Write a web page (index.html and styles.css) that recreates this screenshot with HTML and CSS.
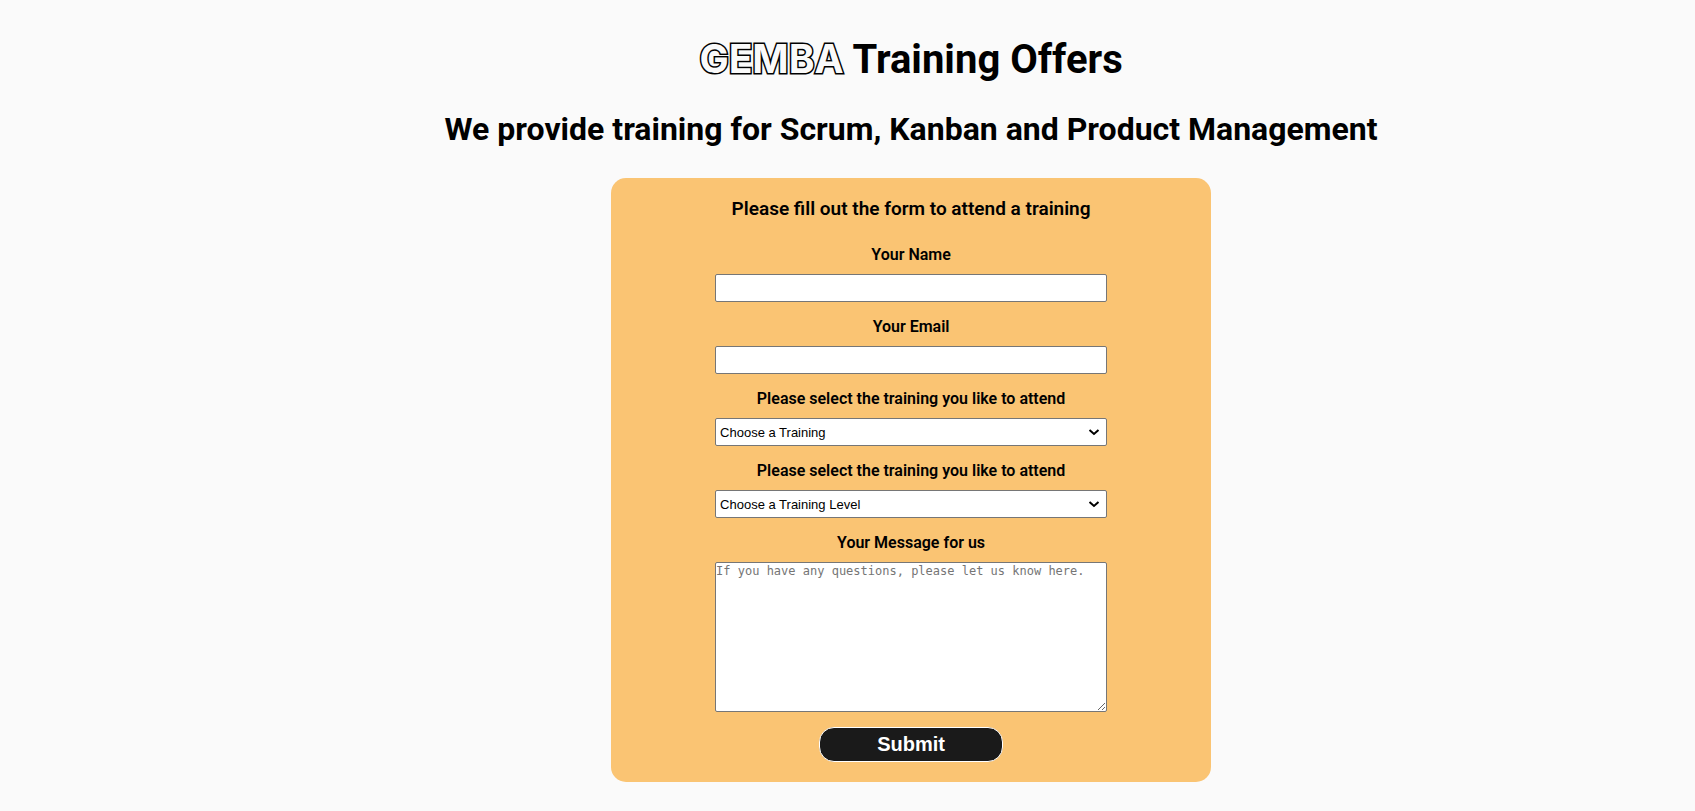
FILE: index.html
```html
<!DOCTYPE html>
<html lang="en">
<head>
<meta charset="utf-8">
<title>GEMBA Training Offers</title>
<link rel="stylesheet" href="styles.css">
</head>
<body>
<main class="page">
  <h1 class="title"><span class="brand">GEMBA</span> Training Offers</h1>
  <h2 class="subtitle">We provide training for Scrum, Kanban and Product Management</h2>
  <form class="card">
    <h3 class="card-title">Please fill out the form to attend a training</h3>
    <label class="label" for="name">Your Name</label>
    <input class="field" id="name" type="text">
    <label class="label" for="email">Your Email</label>
    <input class="field" id="email" type="email">
    <label class="label" for="training">Please select the training you like to attend</label>
    <select class="field select" id="training"><option>Choose a Training</option><option>Scrum</option><option>Kanban</option><option>Product Management</option></select>
    <label class="label" for="level">Please select the training you like to attend</label>
    <select class="field select" id="level"><option>Choose a Training Level</option></select>
    <label class="label" for="message">Your Message for us</label>
    <textarea class="field message" id="message" placeholder="If you have any questions, please let us know here."></textarea>
    <button class="submit" type="submit">Submit</button>
  </form>
</main>
</body>
</html>
```
FILE: styles.css
```css
* { box-sizing: border-box; }

body {
  margin: 0;
  background: #fafafa;
  color: #000;
  font-family: Roboto, "Liberation Sans", sans-serif;
}

.page {
  display: flex;
  flex-direction: column;
  align-items: center;
  padding: 35px 0 20px 7.5%;
  text-align: center;
}

.title {
  margin: 0;
  font-size: 40px;
  line-height: 48px;
  font-weight: 700;
}

.brand {
  font-family: Inter, sans-serif;
  font-size: 39px;
  font-weight: 700;
  color: #fafafa;
  -webkit-text-stroke: 3px #000;
  paint-order: stroke;
}

.subtitle {
  margin: 26px 0 30px;
  font-size: 32px;
  line-height: 38px;
  font-weight: 700;
}

.card {
  display: flex;
  flex-direction: column;
  align-items: center;
  width: 100%;
  max-width: 600px;
  padding: 20px;
  border-radius: 15px;
  background: #fac473;
}

.card-title {
  margin: 0 0 15px;
  font-size: 19px;
  line-height: 22px;
  font-weight: 600;
}

.label {
  padding: 10px 0;
  font-size: 16px;
  line-height: 19px;
  font-weight: 600;
}

.field {
  width: 70%;
  height: 28px;
  margin: 0 0 5px;
  padding: 1px;
  border: 1px solid #767676;
  border-radius: 2px;
  background-color: #fff;
  color: #000;
  font-family: "Liberation Sans", Arial, sans-serif;
  font-size: 13px;
}

/* Chevron drawn at the right edge in place of the native arrow */
.select {
  appearance: none;
  padding: 0 24px 0 4px;
  background-image: url("data:image/svg+xml,%3Csvg xmlns='http://www.w3.org/2000/svg' width='12' height='8'%3E%3Cpath d='M1.5 2l4.5 4 4.5-4' fill='none' stroke='%23000' stroke-width='2'/%3E%3C/svg%3E");
  background-repeat: no-repeat;
  background-position: right 6px center;
}

.message {
  height: 150px;
  margin-bottom: 15px;
  padding: 1px 0;
  font-family: "DejaVu Sans Mono", monospace;
  font-size: 12px;
}

.message::placeholder { color: #757575; }

.submit {
  width: 184px;
  height: 35px;
  padding: 0;
  border: 1px solid #fff;
  border-radius: 15px;
  background: #1a1a1a;
  color: #fff;
  font: bold 20px "Liberation Sans", Arial, sans-serif;
}
```
